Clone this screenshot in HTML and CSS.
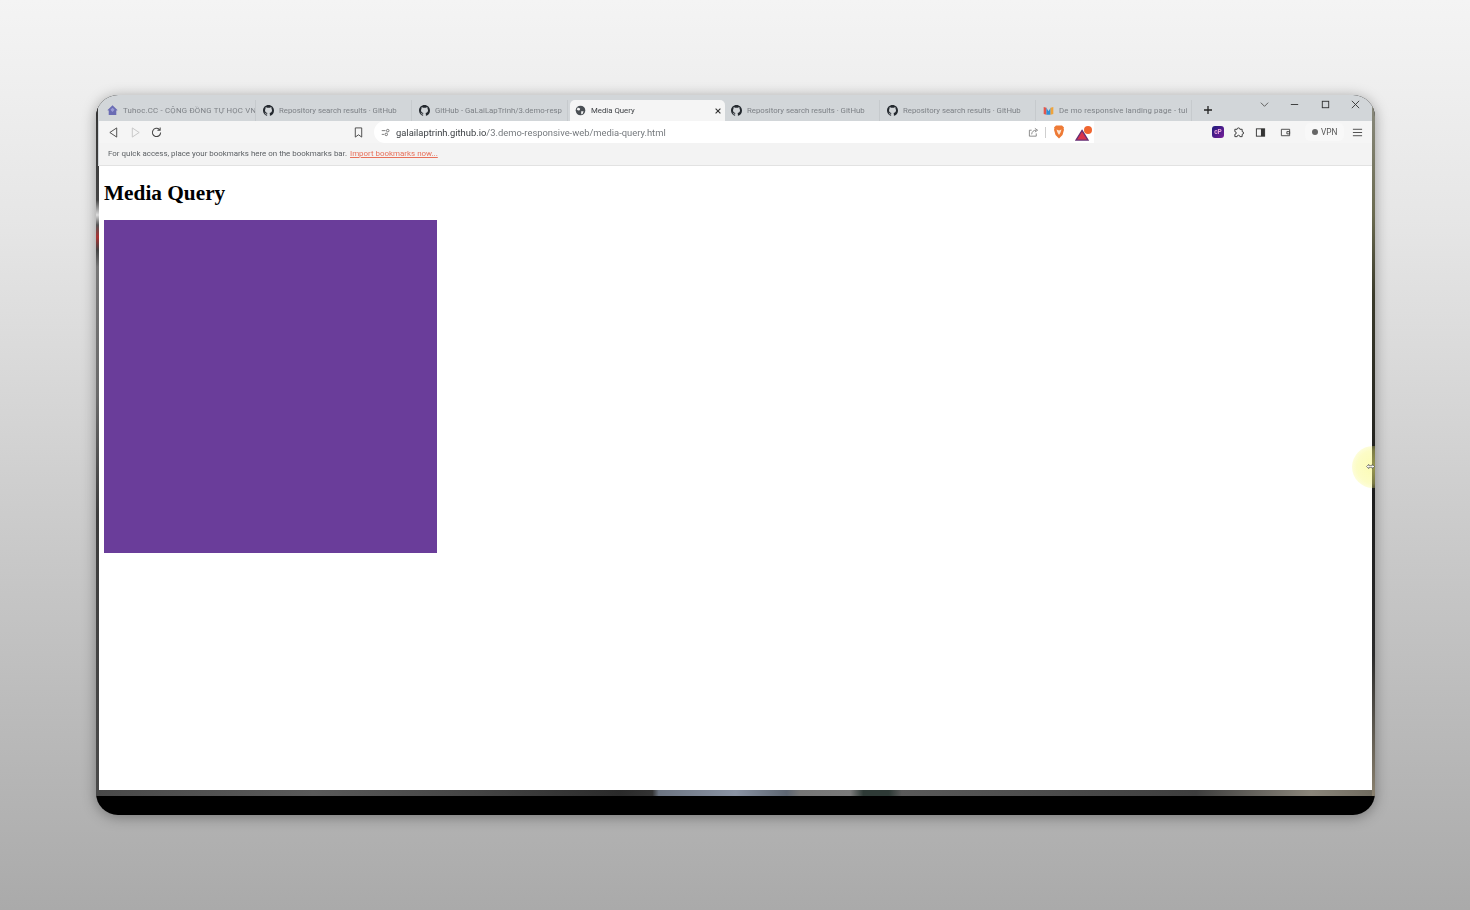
FILE: index.html

```html
<!DOCTYPE html>
<html>
  <head>
    <title>Media Query</title>
    <link rel="stylesheet" href="styles.css">
  </head>
  <body>
    <svg class="defs" width="0" height="0">
      <symbol id="gh" viewBox="0 0 16 16">
        <path fill="#24292f" d="M8 0C3.58 0 0 3.58 0 8c0 3.54 2.29 6.53 5.47 7.59.4.07.55-.17.55-.38 0-.19-.01-.82-.01-1.49-2.01.37-2.53-.49-2.69-.94-.09-.23-.48-.94-.82-1.13-.28-.15-.68-.52-.01-.53.63-.01 1.08.58 1.23.82.72 1.21 1.87.87 2.33.66.07-.52.28-.87.51-1.07-1.78-.2-3.64-.89-3.64-3.95 0-.87.31-1.59.82-2.15-.08-.2-.36-1.02.08-2.12 0 0 .67-.21 2.2.82.64-.18 1.32-.27 2-.27s1.36.09 2 .27c1.53-1.04 2.2-.82 2.2-.82.44 1.1.16 1.92.08 2.12.51.56.82 1.27.82 2.15 0 3.07-1.87 3.75-3.65 3.95.29.25.54.73.54 1.48 0 1.07-.01 1.93-.01 2.2 0 .21.15.46.55.38A8.01 8.01 0 0 0 16 8c0-4.42-3.58-8-8-8z"/>
      </symbol>
    </svg>

    <div class="window">
      <div class="chrome">
        <div class="tabstrip">
          <div class="tab">
            <svg class="favicon" viewBox="0 0 16 16"><path fill="#6a6cb4" d="M8 .5 15.500 7.500 13.500 8v6.500h-11V8L.5 7.500z"/><path fill="#9a9cd6" d="M8 4l3 3-3 3-3-3z"/></svg>
            <span class="tab-title first">Tuhoc.CC - CỘNG ĐỒNG TỰ HỌC VN</span>
          </div>
          <div class="tab">
            <svg class="favicon"><use href="#gh"/></svg>
            <span class="tab-title">Repository search results · GitHub</span>
          </div>
          <div class="tab">
            <svg class="favicon"><use href="#gh"/></svg>
            <span class="tab-title">GitHub - GaLaiLapTrinh/3.demo-resp</span>
          </div>
          <div class="tab active">
            <svg class="favicon" viewBox="0 0 16 16"><circle cx="8" cy="8" r="7" fill="#4a4f54"/><path fill="#f4f4f4" d="M4 3.500 7.500 5 7 7.500 4.500 8 2.500 6.500zM9 9l3.500 0-1.500 4-2 .5z"/></svg>
            <span class="tab-title">Media Query</span>
            <svg class="tab-close" viewBox="0 0 10 10"><path d="M2 2l6 6M8 2l-6 6" stroke="#333" stroke-width="1.400"/></svg>
          </div>
          <div class="tab">
            <svg class="favicon"><use href="#gh"/></svg>
            <span class="tab-title">Repository search results · GitHub</span>
          </div>
          <div class="tab">
            <svg class="favicon"><use href="#gh"/></svg>
            <span class="tab-title">Repository search results · GitHub</span>
          </div>
          <div class="tab">
            <svg class="favicon" viewBox="0 0 16 16"><path fill="#e2574c" d="M1 3l4 1v10l-4-1z"/><path fill="#2f8fd6" d="M5 4l3 5 3-5v10H5z"/><path fill="#f0a33a" d="M11 4l4-1v10l-4 1z"/></svg>
            <span class="tab-title last">De mo responsive landing page - tui</span>
          </div>
          <svg class="new-tab" viewBox="0 0 10 10"><path d="M5 1v8M1 5h8" stroke="#222" stroke-width="1.300"/></svg>
          <div class="win-controls">
            <svg viewBox="0 0 12 12"><path d="M2 4l4 4 4-4" fill="none" stroke="#555"/></svg>
            <svg viewBox="0 0 12 12"><path d="M2 6h8" stroke="#333"/></svg>
            <svg viewBox="0 0 12 12"><rect x="2.500" y="2.500" width="7" height="7" fill="none" stroke="#333"/></svg>
            <svg viewBox="0 0 12 12"><path d="M2 2l8 8M10 2l-8 8" stroke="#333"/></svg>
          </div>
        </div>

        <div class="toolbar">
          <div class="nav">
            <svg viewBox="0 0 12 12"><path d="M9.500 1 2 6l7.500 5z" fill="none" stroke="#444"/></svg>
            <svg viewBox="0 0 12 12"><path d="M2.500 1 10 6l-7.500 5z" fill="none" stroke="#c4c4c4"/></svg>
            <svg viewBox="0 0 12 12"><path d="M10.500 6a4.500 4.500 0 1 1-1.300-3.200M10 .5v3H7" fill="none" stroke="#444" stroke-width="1.100"/></svg>
          </div>
          <svg class="bookmark" viewBox="0 0 12 12"><path d="M2.500 1h7v10L6 8.500 2.500 11z" fill="none" stroke="#444"/></svg>
          <div class="omnibox">
            <svg class="site-info" viewBox="0 0 12 12"><path d="M1 3.500h5M1 8.500h3" stroke="#555"/><circle cx="9" cy="3.500" r="1.700" fill="none" stroke="#555"/><circle cx="7" cy="8.500" r="1.700" fill="none" stroke="#555"/></svg>
            <span class="url"><b>galailaptrinh.github.io</b>/3.demo-responsive-web/media-query.html</span>
            <svg class="share" viewBox="0 0 12 12"><path d="M9 7v3H1.500V3.500H4M4 8c.3-3 2-4.500 5-4.500M7.500 1.500l3 2-3 2" fill="none" stroke="#777" stroke-width=".9"/></svg>
            <span class="omni-sep"></span>
            <svg class="brave" viewBox="0 0 12 14"><path fill="#ee7a35" d="M3 .5h6l2 2-.4 1 .4 1.200L9.500 10 6 13.500 2.500 10 1 4.700l.4-1.200-.4-1z"/><path fill="#fde6d4" d="M3.500 4.500 6 5.500l2.500-1L7.500 7.500 6 10 4.500 7.500z"/></svg>
            <span class="rewards">
              <svg viewBox="0 0 16 13"><path d="M7.500 1.500 14 12H1z" fill="#d8324c" stroke="#662d73" stroke-width="1.400"/></svg>
              <span class="rewards-badge"></span>
            </span>
          </div>
          <div class="extensions">
            <span class="ext-app">cP</span>
            <svg class="puzzle" viewBox="0 0 12 12"><path d="M4.500 2.500a1.500 1.500 0 0 1 3 0H10v2.500a1.500 1.500 0 0 1 0 3V10.500H7.500a1.500 1.500 0 0 0-3 0H2V8a1.500 1.500 0 0 0 0-3V2.500z" fill="none" stroke="#333"/></svg>
            <svg viewBox="0 0 12 12"><rect x="1.500" y="2" width="9" height="8" fill="none" stroke="#333"/><rect x="6.500" y="2" width="4" height="8" fill="#333"/></svg>
            <svg class="wallet" viewBox="0 0 12 12"><path d="M1.500 2.500h9v7h-9zM7.500 5h3v2.500h-3z" fill="none" stroke="#444"/></svg>
          </div>
          <div class="vpn"><span class="vpn-dot"></span>VPN</div>
          <svg class="menu" viewBox="0 0 12 12"><path d="M1 2.500h10M1 6h10M1 9.500h10" stroke="#444"/></svg>
        </div>

        <div class="bookmarks">
          <span>For quick access, place your bookmarks here on the bookmarks bar.</span>
          <a class="import" href="#">Import bookmarks now...</a>
        </div>
      </div>

      <div class="page">
        <h1>Media Query</h1>
        <div class="box"></div>
      </div>
      <div class="bottom-strip"></div>

      <div class="cursor-glow">
        <svg viewBox="0 0 10 8"><path d="M0.500 4 3 1.500V3H7V1.500L9.500 4 7 6.500V5H3v1.500z" fill="#fff" stroke="#444" stroke-width=".7"/></svg>
      </div>
    </div>
  </body>
</html>
```

FILE: styles.css

```css
html, body { height: 100%; }

body {
  margin: 0;
  padding: 95px 0 0 96px;
  box-sizing: border-box;
  overflow: hidden;
  background: linear-gradient(to bottom, #f4f4f4 0, #e6e6e6 220px, #c8c8c8 560px, #aaaaaa 910px);
  font-family: Roboto, "Open Sans", sans-serif;
}

.defs { position: absolute; }

.window {
  position: relative;
  width: 1279px;
  height: 720px;
  box-sizing: border-box;
  padding: 0 3px 19px 3px;
  border-radius: 22px;
  overflow: hidden;
  background: #000;
  box-shadow: 0 2px 14px rgba(0, 0, 0, 0.35);
  display: flex;
  flex-direction: column;
}

.window::before {
  content: "";
  position: absolute;
  left: 0;
  top: 0;
  bottom: 19px;
  width: 3px;
  background: linear-gradient(to bottom, #333 0, #444 105px, #ddd 120px, #555 130px, #a33 142px, #444 155px, #777 172px, #6a6a6a 300px, #3c3c3c 420px, #4a4a4a 701px);
}

.window::after {
  content: "";
  position: absolute;
  right: 0;
  top: 0;
  bottom: 19px;
  width: 3px;
  background: linear-gradient(to bottom, #8c8c80 0, #6b6b50 120px, #3a3a2a 200px, #1c1c1c 400px, #2b2b2b 560px, #8b8270 701px);
}

/* the reference is a video frame, everything small is a bit soft */
.chrome {
  flex: none;
  border-bottom: 1px solid #e2e2e2;
  margin: 0 -1px 0 -1px;
  padding: 0 1px;
  background: #d2d6d9;
  filter: blur(0.3px);
}

/* tabs */
.tabstrip {
  height: 26px;
  padding: 5px 0 0 1px;
  box-sizing: border-box;
  display: flex;
  align-items: stretch;
  background: #d2d6d9;
}

.tab {
  width: 156px;
  padding-left: 7px;
  box-sizing: border-box;
  border-right: 1px solid #c6cacd;
  display: flex;
  align-items: center;
  gap: 5px;
  overflow: hidden;
  flex: none;
}

.tab.active {
  width: 155px;
  margin: 0 -1px 0 2px;
  padding-left: 5px;
  border-right: 0;
  background: #f5f5f5;
  border-radius: 5px 5px 0 0;
}

.favicon {
  width: 11px;
  height: 11px;
  flex: none;
}

.tab-title {
  font-size: 7.800px;
  color: #7d8186;
  white-space: nowrap;
  overflow: hidden;
  flex: 1;
  padding-bottom: 1px;
}

.tab-title.first { letter-spacing: 0.22px; }
.tab-title.last { letter-spacing: 0.15px; }

.tab.active .tab-title { color: #3c3f43; }

.tab-close {
  width: 8px;
  height: 8px;
  margin-right: 3px;
  flex: none;
}

.new-tab {
  width: 10px;
  height: 10px;
  margin: 5px 0 0 11px;
  flex: none;
}

.win-controls {
  margin: -5px 0 0 auto;
  padding: 4px 11px 0 0;
  display: flex;
  gap: 19.500px;
  height: 12px;
}

.win-controls svg {
  width: 11px;
  height: 11px;
}

/* toolbar */
.toolbar {
  height: 22px;
  padding: 0 9px 0 9px;
  display: flex;
  align-items: center;
  background: #f5f5f5;
}

.toolbar svg { flex: none; }

.nav {
  display: flex;
  align-items: center;
  gap: 10.500px;
}

.nav svg {
  width: 11px;
  height: 11px;
}

.bookmark {
  width: 11px;
  height: 11px;
  margin-left: 191px;
}

.omnibox {
  width: 720px;
  height: 22px;
  margin-left: 10px;
  padding-left: 7px;
  box-sizing: border-box;
  display: flex;
  align-items: center;
  background: #fff;
  border-radius: 11px 0 0 11px;
}

.site-info {
  width: 9px;
  height: 9px;
}

.url {
  margin-left: 6px;
  font-size: 9.400px;
  color: #75797d;
  white-space: nowrap;
  width: 632px;
}

.url b {
  font-weight: 400;
  color: #3a3e42;
}

.share {
  width: 11px;
  height: 11px;
}

.omni-sep {
  width: 1px;
  height: 11px;
  margin: 0 7px 0 6px;
  background: #cfcfcf;
}

.brave {
  width: 12px;
  height: 14px;
}

.rewards {
  position: relative;
  width: 15px;
  height: 12px;
  margin-left: 10px;
}

.rewards svg {
  width: 15px;
  height: 12px;
}

.rewards-badge {
  position: absolute;
  top: 0;
  right: -2px;
  width: 8px;
  height: 8px;
  border-radius: 50%;
  background: #f0652f;
}

.extensions {
  margin-left: 118px;
  display: flex;
  align-items: center;
  gap: 11px;
}

.extensions svg {
  width: 11px;
  height: 11px;
}

.extensions .puzzle { margin-left: -2px; }
.extensions .wallet { margin-left: 3px; }

.ext-app {
  width: 12px;
  height: 12px;
  border-radius: 3px;
  background: linear-gradient(135deg, #1d1a7a, #7a1f9a);
  color: #f4a9e0;
  font-size: 6.500px;
  font-weight: 700;
  line-height: 12px;
  text-align: center;
}

.vpn {
  margin-left: 14px;
  padding: 0 7px;
  height: 18px;
  border-radius: 5px;
  background: #f8f8f8;
  display: flex;
  align-items: center;
  gap: 3px;
  font-size: 8.300px;
  color: #555;
}

.vpn-dot {
  width: 6px;
  height: 6px;
  border-radius: 50%;
  background: #666;
}

.menu {
  width: 11px;
  height: 11px;
  margin-left: auto;
}

/* bookmarks bar */
.bookmarks {
  height: 22px;
  padding: 0 0 2px 9px;
  box-sizing: border-box;
  display: flex;
  align-items: center;
  gap: 3px;
  background: #f3f3f3;
  font-size: 7.950px;
  color: #5b5f63;
}

.import {
  color: #e8705a;
}

/* page */
.page {
  flex: 1;
  padding: 1px 0 0 5px;
  background: #fff;
  min-height: 0;
}

h1 {
  margin: 14px 0 14px;
  font-family: "Liberation Serif", serif;
  font-size: 21.300px;
  line-height: 25px;
  font-weight: 700;
  color: #000;
}

.box {
  width: 333px;
  height: 333px;
  background: #6a3d9a;
}

.bottom-strip {
  flex: none;
  height: 6px;
  margin: 0 -3px;
  background: linear-gradient(to right, #4a4a4a 0, #5a5a5a 17%, #444 30%, #2a2a2a 41%, #333 43.500%, #6d7582 44%, #8a93a3 50%, #5e6672 54%, #777 55%, #7a7a7a 59%, #2e3a36 60%, #2e3a36 62%, #5a5a5a 63%, #3e3e3e 86%, #8a857a 95%, #6f6a5e 100%);
}

/* yellow highlight around the recorded cursor */
.cursor-glow {
  position: absolute;
  left: 1256px;
  top: 351px;
  width: 42px;
  height: 42px;
  border-radius: 50%;
  background: radial-gradient(circle, rgba(248, 248, 120, 0.55) 0, rgba(248, 248, 120, 0.42) 55%, rgba(248, 248, 120, 0) 100%);
  z-index: 2;
}

.cursor-glow svg {
  position: absolute;
  left: 14px;
  top: 17px;
  width: 9px;
  height: 7px;
}
```
